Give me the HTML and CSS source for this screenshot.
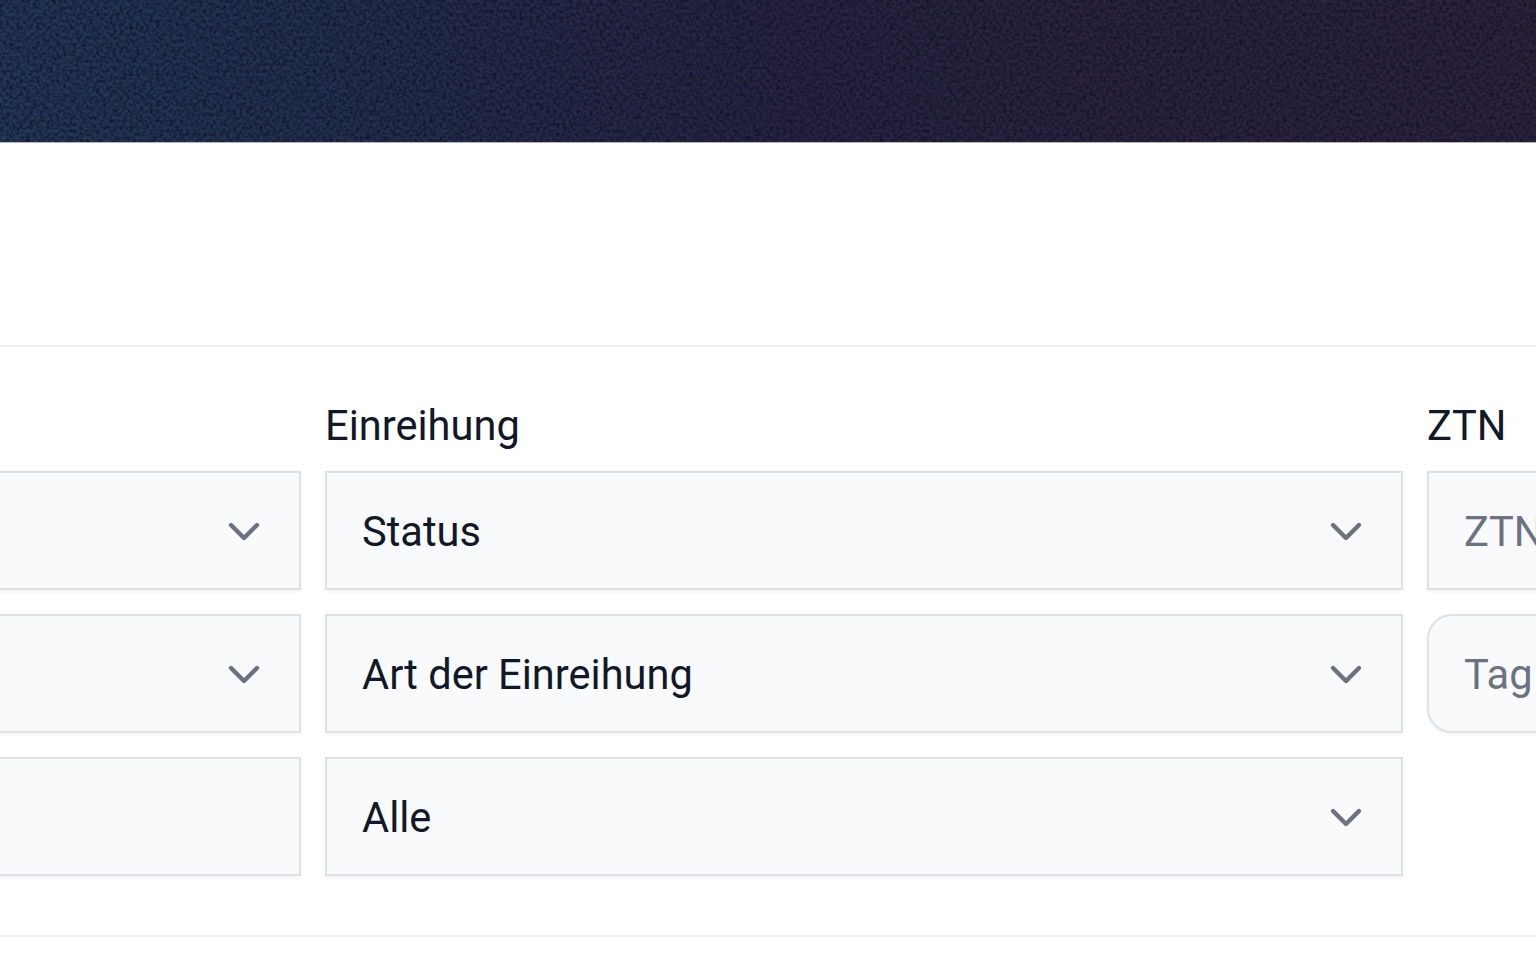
FILE: index.html

```html
<!DOCTYPE html>
<html lang="de">
<head>
  <meta charset="UTF-8" />
  <title>Einreihung</title>
  <link rel="stylesheet" href="styles.css">
</head>
<body>
  <header class="hero">
    <svg class="hero-noise" width="100%" height="100%">
      <filter id="grain" color-interpolation-filters="sRGB">
        <feTurbulence type="fractalNoise" baseFrequency="0.3" numOctaves="2" seed="7"></feTurbulence>
        <feColorMatrix type="matrix" values="0 0 0 0 0.05  0 0 0 0 0.05  0 0 0 0 0.12  1.7 0 0 0 -0.62"></feColorMatrix>
      </filter>
      <rect width="100%" height="100%" filter="url(#grain)"></rect>
    </svg>
  </header>

  <section class="filters">
    <form class="filter-grid">
      <div class="label-cell"></div>
      <label class="filter-label" for="status">Einreihung</label>
      <label class="filter-label" for="ztn">ZTN</label>

      <div class="select-wrap first-col">
        <select class="field"><option></option></select>
        <svg class="chevron" viewBox="0 0 20 20"><path d="M3.5 6.5l6.5 6.5 6.5-6.5"></path></svg>
      </div>
      <div class="select-wrap">
        <select class="field" id="status"><option>Status</option></select>
        <svg class="chevron" viewBox="0 0 20 20"><path d="M3.5 6.5l6.5 6.5 6.5-6.5"></path></svg>
      </div>
      <input class="field text-field" id="ztn" type="text" placeholder="ZTN">

      <div class="select-wrap first-col">
        <select class="field"><option></option></select>
        <svg class="chevron" viewBox="0 0 20 20"><path d="M3.5 6.5l6.5 6.5 6.5-6.5"></path></svg>
      </div>
      <div class="select-wrap">
        <select class="field"><option>Art der Einreihung</option></select>
        <svg class="chevron" viewBox="0 0 20 20"><path d="M3.5 6.5l6.5 6.5 6.5-6.5"></path></svg>
      </div>
      <input class="field text-field tag-field" type="text" placeholder="Tag">

      <div class="first-col">
        <input class="field" type="text">
      </div>
      <div class="select-wrap">
        <select class="field"><option>Alle</option></select>
        <svg class="chevron" viewBox="0 0 20 20"><path d="M3.5 6.5l6.5 6.5 6.5-6.5"></path></svg>
      </div>
    </form>
  </section>
</body>
</html>
```

FILE: styles.css

```css
:root {
  --gray50: #f9fafb;
  --gray200: #dfe1e7;
  --gray500: #6b7280;
  --gray900: #111827;
}

html, body {
  height: 100%;
}

body {
  margin: 0;
  overflow: hidden;
  background: #fff;
  color: var(--gray900);
  font-family: Roboto, sans-serif;
}

.hero {
  position: relative;
  height: 142px;
  background: linear-gradient(82deg, #223857 0%, #22304f 22%, #262443 48%, #2a233f 72%, #2c233b 100%);
  box-shadow: 0 1px 0 #b4b4c2;
  overflow: hidden;
}

.hero-noise {
  position: absolute;
  inset: 0;
}

.filters {
  margin-top: 203px;
  border-top: 2px solid #eef0f2;
  border-bottom: 2px solid #eef0f2;
  padding: 57px 0 60px;
}

.filter-grid {
  display: grid;
  grid-template-columns: 301px 1078px 240px;
  grid-template-rows: 42px repeat(3, 118px);
  column-gap: 24px;
  row-gap: 25px;
}

.filter-label {
  font-size: 41.6px;
  line-height: 44px;
}

.select-wrap {
  position: relative;
}

.first-col {
  margin-left: -6px;
}

.field {
  display: block;
  width: 100%;
  height: 119px;
  box-sizing: border-box;
  margin: 0;
  padding: 2px 35px 0;
  border: 2px solid var(--gray200);
  border-radius: 0;
  outline: none;
  appearance: none;
  background: var(--gray50);
  color: var(--gray900);
  font-family: Roboto, sans-serif;
  font-size: 41.6px;
  box-shadow: 0 2px 4px rgba(0, 0, 0, 0.05);
}

.field::placeholder {
  color: var(--gray500);
  opacity: 1;
}

.tag-field {
  border-radius: 25px 0 0 25px;
}

.chevron {
  position: absolute;
  right: 37px;
  top: 41px;
  width: 40px;
  height: 40px;
  fill: none;
  stroke: var(--gray500);
  stroke-width: 2.2;
  stroke-linecap: round;
  stroke-linejoin: round;
}
```
